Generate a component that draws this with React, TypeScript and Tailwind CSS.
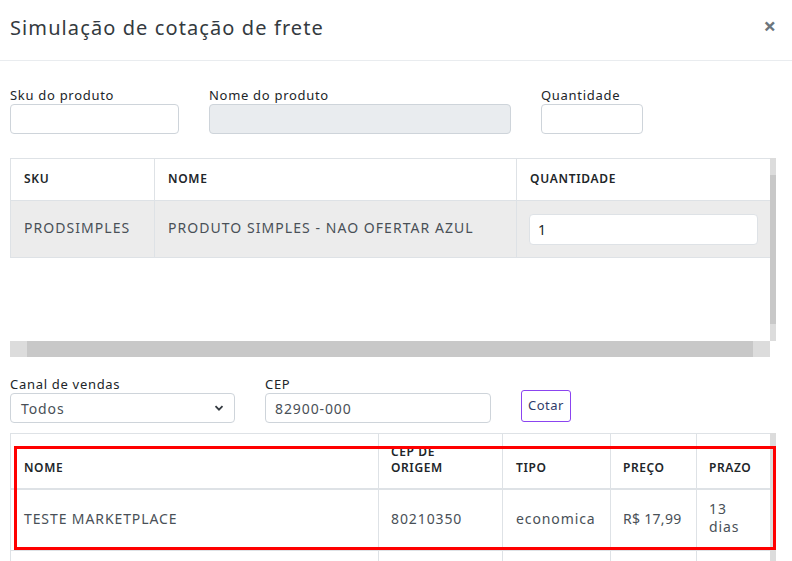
import React from 'react';

const font = { fontFamily: '"Noto Sans", "Open Sans", Arial, sans-serif' };

function Field({ label, className, disabled }: { label: string; className: string; disabled?: boolean }) {
  return (
    <div className={className}>
      <div className="text-[13px] leading-[16px] tracking-[0.7px] text-[#212529] mb-[1px]">{label}</div>
      <div
        className={`h-[30px] rounded-[4px] border border-[#ced4da] ${disabled ? 'bg-[#e9ecef]' : 'bg-white'}`}
      />
    </div>
  );
}

export default function App() {
  return (
    <div style={font} className="w-[792px] h-[561px] bg-white relative overflow-hidden text-[#212529]">
      <div className="h-[61px] border-b border-[#e9ecef] flex items-center justify-between pl-[10px] pr-[16px]">
        <h1 className="text-[20px] leading-[24px] text-[#343a40] tracking-[1.1px] -mt-[4px]">
          Simulação de cotação de frete
        </h1>
        <span className="text-[22px] leading-none font-bold text-[#6c757d] -mt-[10px]">×</span>
      </div>

      <div className="px-[10px]">
        <div className="flex pt-[26px]">
          <Field label="Sku do produto" className="w-[169px]" />
          <Field label="Nome do produto" className="w-[302px] ml-[30px]" disabled />
          <Field label="Quantidade" className="w-[102px] ml-[30px]" />
        </div>

        <div className="mt-[24px] w-[766px]">
          <div className="flex">
            <div className="w-[760px] h-[183px] bg-white overflow-hidden">
              <table className="w-[760px] border-collapse text-left">
                <thead>
                  <tr className="h-[42px] text-[12px] tracking-[0.7px] text-[#212529]">
                    <th className="w-[144px] pl-[13px] pb-[2px] border border-[#dee2e6] font-semibold">SKU</th>
                    <th className="w-[362px] pl-[13px] pb-[2px] border border-[#dee2e6] font-semibold">NOME</th>
                    <th className="pl-[13px] pb-[2px] border border-[#dee2e6] border-r-0 font-semibold">QUANTIDADE</th>
                  </tr>
                </thead>
                <tbody className="text-[14px] tracking-[1.05px] text-[#495057]">
                  <tr className="h-[57px] bg-[#ececec]">
                    <td className="pl-[13px] pb-[3px] border border-[#dee2e6]">PRODSIMPLES</td>
                    <td className="pl-[13px] pb-[3px] border border-[#dee2e6]">PRODUTO SIMPLES - NAO OFERTAR AZUL</td>
                    <td className="pl-[12px] pr-[12px] border border-[#dee2e6] border-r-0">
                      <div className="h-[31px] w-[229px] bg-white rounded-[4px] border border-[#dee2e6] flex items-center pl-[8px] text-[14px] text-[#212529]">1</div>
                    </td>
                  </tr>
                </tbody>
              </table>
            </div>
            <div className="w-[6px] h-[183px] bg-[#dcdcdc] pt-[17px]">
              <div className="h-[149px] bg-[#c8c8c8]" />
            </div>
          </div>
          <div className="w-[760px] h-[16px] bg-[#dcdcdc] pl-[17px] pr-[17px]">
            <div className="h-full bg-[#c8c8c8]" />
          </div>
        </div>

        <div className="flex items-end mt-[19px]">
          <div className="w-[225px]">
            <div className="text-[13px] leading-[16px] tracking-[0.7px] mb-[1px]">Canal de vendas</div>
            <div className="h-[30px] rounded-[4px] border border-[#ced4da] bg-white flex items-center justify-between pl-[10px] pr-[10px] text-[14px] tracking-[0.9px] text-[#495057]">
              <span>Todos</span>
              <svg width="10" height="10" viewBox="0 0 10 10" fill="none">
                <path d="M1.5 3.2 L5 6.7 L8.5 3.2" stroke="#343a40" strokeWidth="1.8" />
              </svg>
            </div>
          </div>
          <div className="w-[226px] ml-[30px]">
            <div className="text-[13px] leading-[16px] tracking-[0.7px] mb-[1px]">CEP</div>
            <div className="h-[30px] rounded-[4px] border border-[#ced4da] bg-white flex items-center pl-[9px] text-[14px] tracking-[0.9px] text-[#495057]">
              82900-000
            </div>
          </div>
          <div className="ml-[30px] mb-[1px] h-[32px] w-[50px] rounded-[3px] border border-[#8b44f0] flex items-center justify-center text-[13px] tracking-[0.5px] text-[#2f3b6b]">
            Cotar
          </div>
        </div>

        <div className="mt-[10px] flex w-[766px]">
          <table className="w-[760px] border-collapse text-left">
            <thead>
              <tr className="h-[55px] text-[12px] leading-[16px] tracking-[0.6px]">
                <th className="w-[368px] pl-[13px] pb-[12px] align-bottom border border-[#dee2e6] border-b-2 font-semibold">NOME</th>
                <th className="w-[124px] pl-[12px] pb-[12px] align-bottom border border-[#dee2e6] border-b-2 font-semibold">CEP DE<br />ORIGEM</th>
                <th className="w-[108px] pl-[13px] pb-[12px] align-bottom border border-[#dee2e6] border-b-2 font-semibold">TIPO</th>
                <th className="w-[86px] pl-[12px] pb-[12px] align-bottom border border-[#dee2e6] border-b-2 font-semibold">PREÇO</th>
                <th className="pl-[12px] pb-[12px] align-bottom border border-[#dee2e6] border-b-2 border-r-0 font-semibold">PRAZO</th>
              </tr>
            </thead>
            <tbody className="text-[14px] tracking-[0.9px] text-[#495057]">
              <tr className="h-[60px]">
                <td className="pl-[13px] pb-[3px] border border-[#dee2e6]">TESTE MARKETPLACE</td>
                <td className="pl-[12px] pb-[3px] border border-[#dee2e6]">80210350</td>
                <td className="pl-[13px] pb-[3px] border border-[#dee2e6]">economica</td>
                <td className="pl-[12px] pb-[3px] border border-[#dee2e6] tracking-[0.3px]">R$ 17,99</td>
                <td className="pl-[12px] pr-[6px] pb-[3px] border border-[#dee2e6] border-r-0 leading-[18px]">13<br />dias</td>
              </tr>
              <tr className="h-[40px]">
                <td className="border border-[#dee2e6]" />
                <td className="border border-[#dee2e6]" />
                <td className="border border-[#dee2e6]" />
                <td className="border border-[#dee2e6]" />
                <td className="border border-[#dee2e6] border-r-0" />
              </tr>
            </tbody>
          </table>
          <div className="w-[6px] h-[160px] bg-[#dcdcdc]" />
        </div>
      </div>

      <div className="absolute left-[14px] top-[446px] w-[762px] h-[104px] border-[3px] border-[#ff0000] pointer-events-none" />
    </div>
  );
}
